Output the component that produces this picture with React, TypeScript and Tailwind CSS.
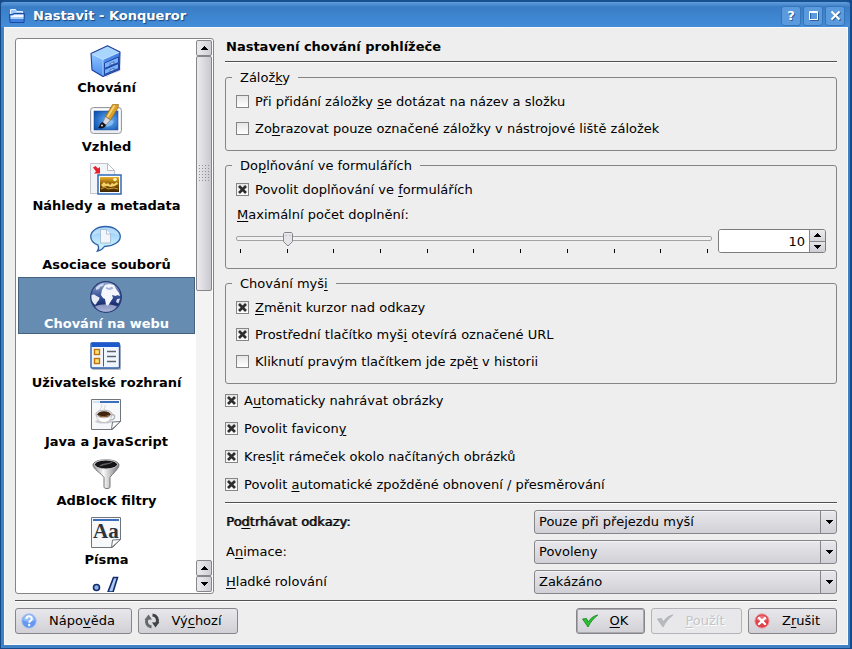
import { useState } from 'react';
import type { ReactNode } from 'react';

type IconProps = { className?: string };

const CabinetIcon = ({ className }: IconProps) => (
  <svg viewBox="0 0 32 32" className={className} aria-hidden="true">
    <defs>
      <linearGradient id="cab-left" x1="0" y1="0" x2="0" y2="1">
        <stop offset="0" stopColor="#8fc4ff" />
        <stop offset="1" stopColor="#4a8cf0" />
      </linearGradient>
      <linearGradient id="cab-right" x1="0" y1="0" x2="1" y2="1">
        <stop offset="0" stopColor="#5a9af5" />
        <stop offset="1" stopColor="#2a62d0" />
      </linearGradient>
    </defs>
    <path d="M15 32l15-6 1.500-3-14 9z" fill="#d5d3ee" />
    <path d="M1 8.500l12 6v17L2 25z" fill="url(#cab-left)" />
    <path d="M13 14.500L30 7l-.500 17.500L13 31.500z" fill="url(#cab-right)" />
    <path d="M1 8.500L17.500.700 30 7l-17 7.500z" fill="#a9d6ff" />
    <path d="M1 8.500L17.500.700 30 7l-.500 17.500L13 31.500 2 25z" fill="none" stroke="#1b3f96" strokeWidth="1.100" strokeLinejoin="round" />
    <path d="M13 14.500v16M2 9l11 5.500L29 7.500" fill="none" stroke="#c5e2ff" strokeWidth=".7" />
    <path d="M14.500 18L28.500 12v5.500L14.500 23.500zM14.500 24.500l14-6v5l-14 6z" fill="#79b3ff" stroke="#173b92" strokeWidth=".9" />
    <path d="M20 18.500l4-1.700v1.800l-4 1.700zM20 25l4-1.700v1.800l-4 1.700z" fill="#dcecff" stroke="#173b92" strokeWidth=".6" />
  </svg>
);

const AppearanceIcon = ({ className }: IconProps) => (
  <svg viewBox="0 0 32 32" className={className} aria-hidden="true">
    <defs>
      <radialGradient id="scr" cx=".6" cy=".5" r=".7">
        <stop offset="0" stopColor="#6db4f5" />
        <stop offset="1" stopColor="#0d4faf" />
      </radialGradient>
    </defs>
    <rect x=".5" y="3.500" width="31" height="26" rx="3" fill="#ececf0" stroke="#9a9aa2" />
    <rect x="2" y="5" width="28" height="22" rx="1" fill="#fff" />
    <rect x="4" y="7" width="24" height="19" fill="url(#scr)" stroke="#234f94" strokeWidth=".6" />
    <path d="M14 14l4-1 3 3 3 1-2 4-5 2-4-3z" fill="#a7d3fb" opacity=".6" />
    <path d="M22.500.500h6L28 4l-7.500 12-5-3.500z" fill="#dd9f27" stroke="#8a5a0c" strokeWidth=".6" />
    <path d="M24.500 1.500l-7 11.500" stroke="#f9d67c" strokeWidth="1.600" />
    <path d="M15.500 12.500l5 3.500-4.500 5-3.500-2z" fill="#d7d7dc" stroke="#66666e" strokeWidth=".6" />
    <path d="M12.500 18l3.500 3c-1 3-4 4-8 3 2-1 1.500-5 4.500-6z" fill="#121216" />
    <circle cx="12" cy="21.500" r="1" fill="#e4e4e8" />
  </svg>
);

const PreviewIcon = ({ className }: IconProps) => (
  <svg viewBox="0 0 32 32" className={className} aria-hidden="true">
    <defs>
      <linearGradient id="gold" x1="0" y1="0" x2="0" y2="1">
        <stop offset="0" stopColor="#e9b02c" />
        <stop offset=".45" stopColor="#8f5d05" />
        <stop offset="1" stopColor="#3c2502" />
      </linearGradient>
    </defs>
    <path d="M.500.500h17l7 7v23h-24z" fill="#f3f4f8" stroke="#c3c5cd" />
    <path d="M17.500.500v7h7z" fill="#fff" stroke="#b9bbc4" />
    <path d="M3 4.500L5.500 3 8 5.500l2-1.500v6.500H4l2-2z" fill="#e8202c" />
    <rect x="8" y="12" width="23" height="19" fill="#fff" stroke="#2f6bb8" strokeWidth="1.500" />
    <rect x="10" y="14" width="19" height="15" fill="url(#gold)" />
    <circle cx="25" cy="16.500" r="1.800" fill="#fff1a8" />
    <path d="M11 22l3-3 2 2 2-1 2 2 2-2 2 1 3-2 1 2-3 2-4 1-4-1-4 1z" fill="#f2d06a" />
    <path d="M11 26l4-2 3 2 6-1 4 1" stroke="#d29b2b" fill="none" />
  </svg>
);

const BubbleIcon = ({ className }: IconProps) => (
  <svg viewBox="0 0 32 32" className={className} aria-hidden="true">
    <defs>
      <linearGradient id="bub" x1="0" y1="0" x2="0" y2="1">
        <stop offset="0" stopColor="#8cc4f3" />
        <stop offset=".5" stopColor="#b4e0fd" />
        <stop offset="1" stopColor="#dcf8ff" />
      </linearGradient>
    </defs>
    <path d="M15.500 4.500C7 4.500.700 9 .700 14.500c0 4 3 7 7.300 8.700 1 2.300.700 4.300-.600 6 3.500-.800 5.600-2.500 7-4.700C23 24.500 30.300 20 30.300 14.500S24 4.500 15.500 4.500z" fill="url(#bub)" stroke="#2d62a9" strokeWidth="1.300" />
    <path d="M15.500 5.500C9 5.500 3 9 2.500 13 9 10 22 10 28.500 13c0-4-6-7.500-13-7.500z" fill="#fff" opacity=".3" />
    <path d="M10.500 7.500h6l4 4.500v9h-10z" fill="#f2f6fa" stroke="#9bb6cf" strokeWidth=".8" />
    <path d="M16.500 7.500V12h4" fill="#fff" stroke="#9bb6cf" strokeWidth=".8" />
  </svg>
);

const GlobeIcon = ({ className }: IconProps) => (
  <svg viewBox="0 0 32 32" className={className} aria-hidden="true">
    <defs>
      <linearGradient id="globe" x1="0" y1="0" x2="0" y2="1">
        <stop offset="0" stopColor="#98aad4" />
        <stop offset=".5" stopColor="#344f95" />
        <stop offset=".75" stopColor="#1a2e70" />
        <stop offset="1" stopColor="#8796cc" />
      </linearGradient>
    </defs>
    <circle cx="16" cy="16" r="15.300" fill="url(#globe)" stroke="#283b75" strokeWidth="1.200" />
    <path d="M1.500 14c2-1 3.500-.500 5 1l3 1.500c0 3-2.500 4-3 6L5 24c-3-3-4-6-3.500-10z" fill="#e6eaf5" />
    <path d="M6 6.500C8.500 4 11 2.500 14 2.200L13 5l-3 1-1 2-3 1z" fill="#cdd6ed" />
    <path d="M12 9l3-5 4-1 5 1 2 4 3 4 1 3-3-1-1 1-4-1 1 3-2 3-3 5-2-1-1-6-2-1-2-3z" fill="#f5f7fc" />
    <path d="M16 6l3 1 3-1.500 1.500 2L20 9l-4-1z" fill="#a5b4da" />
    <path d="M27 18l3-.500-1.500 5L26 21z" fill="#d3daed" />
    <path d="M5 25.500c6-3 16-3 22 0-5 7-17 7-22 0z" fill="#c5cdea" opacity=".65" />
  </svg>
);

const LayoutIcon = ({ className }: IconProps) => (
  <svg viewBox="0 0 32 32" className={className} aria-hidden="true">
    <rect x="2" y="5" width="29" height="25" rx="1" fill="#bcbcc4" />
    <rect x="1" y="3" width="28.500" height="25" rx="1" fill="#f0f6ff" stroke="#2d5fa8" strokeWidth="1.400" />
    <rect x="1.500" y="2.500" width="27.500" height="4.500" fill="#1c58cb" />
    <path d="M13.500 8v18.500" stroke="#4b5a78" />
    <rect x="4.500" y="9.500" width="5" height="5" fill="#ffe27a" stroke="#c2720c" strokeWidth="1.400" />
    <rect x="4.500" y="18.500" width="5" height="5" fill="#ffe27a" stroke="#c2720c" strokeWidth="1.400" />
    <path d="M17 11.500h9M17 16.500h9M17 21.500h9" stroke="#5c6068" strokeWidth="1.300" />
  </svg>
);

const PageFrame = ({ children, className }: IconProps & { children: ReactNode }) => (
  <svg viewBox="0 0 32 32" className={className} aria-hidden="true">
    <path d="M1.500.500h29v22l-8 8h-21z" fill="#f7f8f9" stroke="#70757c" />
    <rect x="3" y="2" width="26" height="2" fill="#3a70bb" />
    {children}
    <path d="M21.500 30.500l1-7.500 8-.500z" fill="#fff" stroke="#70757c" />
  </svg>
);

const JavaIcon = ({ className }: IconProps) => (
  <PageFrame className={className}>
    <rect x="3" y="2" width="7" height="2" fill="#d3e0f2" />
    <path d="M11 12c-3-3 3-3 0-7M15 11c-2-2 1-3 0-5" stroke="#d3d4d8" fill="none" />
    <path d="M21 16c5-2 5 5-1 5" fill="none" stroke="#b5b7bc" strokeWidth="1.500" />
    <ellipse cx="14" cy="22.500" rx="9" ry="2" fill="#cdced2" />
    <path d="M6 14.500c0 12 16 12 16 0z" fill="#fff" stroke="#b5b7bc" strokeWidth=".8" />
    <ellipse cx="14" cy="15" rx="8" ry="3.800" fill="#e5e5e8" stroke="#9c9ea4" strokeWidth=".7" />
    <ellipse cx="14" cy="15.200" rx="6.500" ry="2.900" fill="#3e2411" />
    <path d="M9 16.500c3 2 8 1 10-.500" stroke="#a66a37" fill="none" />
  </PageFrame>
);

const FunnelIcon = ({ className }: IconProps) => (
  <svg viewBox="0 0 32 32" className={className} aria-hidden="true">
    <defs>
      <linearGradient id="fun" x1="0" y1="0" x2="1" y2="0">
        <stop offset="0" stopColor="#8a8a8e" />
        <stop offset=".4" stopColor="#fafafa" />
        <stop offset="1" stopColor="#77777b" />
      </linearGradient>
    </defs>
    <path d="M3 7c0-7 26-7 26 0 0 4-7 9-9 12.500V29c0 2-6 2-6 0v-9.500C12 16 3 11 3 7z" fill="url(#fun)" stroke="#77777c" />
    <ellipse cx="16" cy="6.500" rx="11.500" ry="4.500" fill="#141416" stroke="#d5d5d8" />
    <path d="M10 8c4-3 8-1 12-4" stroke="#5d5d62" strokeWidth="1.500" fill="none" />
  </svg>
);

const FontsIcon = ({ className }: IconProps) => (
  <PageFrame className={className}>
    <text x="3" y="21" fontSize="21" fontWeight="700" fontFamily="Liberation Serif, serif" fill="#2e343b">Aa</text>
  </PageFrame>
);

const StylesheetIcon = ({ className }: IconProps) => (
  <svg viewBox="0 0 32 32" className={className} aria-hidden="true">
    <circle cx="6.500" cy="11.500" r="3" fill="#8bb4ec" stroke="#122a6b" strokeWidth="1.600" />
    <path d="M23.500 1.500h4L23 16h-5z" fill="#a9c9f4" stroke="#122a6b" strokeWidth="1.600" />
  </svg>
);

const HelpIcon = () => (
  <svg viewBox="0 0 16 16" className="size-4" aria-hidden="true">
    <circle cx="8" cy="8" r="7.300" fill="#6698f0" stroke="#b3c8f0" />
    <path d="M2 7a6 6 0 0112 0c-3 2-9 2-12 0z" fill="#93bbfa" />
    <path d="M5.400 6c0-3.600 5.400-3.400 5.400-.300 0 2-2.600 2-2.600 4" fill="none" stroke="#fff" strokeWidth="2" />
    <circle cx="8.200" cy="12" r="1.200" fill="#fff" />
  </svg>
);

const ResetIcon = () => (
  <svg viewBox="0 0 16 16" className="size-4" aria-hidden="true">
    <path d="M7.500 14C3.500 13.500 1.500 10 3 6" fill="none" stroke="#66696e" strokeWidth="3" />
    <path d="M.500 7L4.500 1.500 8 6.500z" fill="#66696e" />
    <path d="M8.500 2c4 .500 6 4 4.500 8" fill="none" stroke="#3f4246" strokeWidth="3" />
    <path d="M15.500 9L11.500 14.500 8 9.500z" fill="#3f4246" />
  </svg>
);

const CheckIcon = ({ disabled }: { disabled?: boolean }) => (
  <svg viewBox="0 0 16 16" className="size-4" aria-hidden="true">
    <path
      d="M.500 6l4-.500 1.700 3.500C8.500 5.500 11 3 15.800 2 11.500 5.500 8.500 9 6 14z"
      fill={disabled ? '#b9babd' : '#2cc232'}
      stroke={disabled ? '#adaeb1' : '#15801c'}
      strokeWidth=".8"
    />
  </svg>
);

const CancelIcon = () => (
  <svg viewBox="0 0 16 16" className="size-4" aria-hidden="true">
    <circle cx="8" cy="8" r="7.200" fill="#dd4249" stroke="#eba5a8" />
    <path d="M2.500 7a5.600 5.600 0 0111 0c-3 1-8 1-11 0z" fill="#ec757a" />
    <path d="M5 5l6 6M11 5l-6 6" stroke="#fff" strokeWidth="2.400" strokeLinecap="round" />
  </svg>
);

const UpArrow = () => (
  <svg viewBox="0 0 7 4" className="h-1 w-[7px]" shapeRendering="crispEdges" aria-hidden="true">
    <path d="M3 0h1v1h1v1h1v1h1v1H0V3h1V2h1V1h1z" />
  </svg>
);

const DownArrow = () => (
  <svg viewBox="0 0 7 4" className="h-1 w-[7px]" shapeRendering="crispEdges" aria-hidden="true">
    <path d="M0 0h7v1H6v1H5v1H4v1H3V3H2V2H1V1H0z" />
  </svg>
);

const PAGES = [
  { id: 'behavior', label: 'Chování', Icon: CabinetIcon },
  { id: 'look', label: 'Vzhled', Icon: AppearanceIcon },
  { id: 'previews', label: 'Náhledy a metadata', Icon: PreviewIcon },
  { id: 'files', label: 'Asociace souborů', Icon: BubbleIcon },
  { id: 'web', label: 'Chování na webu', Icon: GlobeIcon },
  { id: 'ui', label: 'Uživatelské rozhraní', Icon: LayoutIcon },
  { id: 'java', label: 'Java a JavaScript', Icon: JavaIcon },
  { id: 'adblock', label: 'AdBlocK filtry', Icon: FunnelIcon },
  { id: 'fonts', label: 'Písma', Icon: FontsIcon },
  { id: 'css', label: '', Icon: StylesheetIcon },
];

const TICKS = [0, 10, 20, 30, 40, 50, 60, 70, 80, 90, 100];

// "_" stands before the accelerator letter
const Accel = ({ text }: { text: string }) => {
  const [before, rest] = text.split('_');
  if (!rest) return <span>{before}</span>;
  return (
    <span className="whitespace-pre">
      {before}
      <span className="underline underline-offset-2">{rest[0]}</span>
      {rest.slice(1)}
    </span>
  );
};

const Check = ({ text, checked = false }: { text: string; checked?: boolean }) => (
  <label className="flex items-center gap-1.5">
    <span className="grid">
      <input
        type="checkbox"
        defaultChecked={checked}
        className="peer col-start-1 row-start-1 size-[13px] appearance-none border border-[#858585] bg-gradient-to-b from-[#e6e6e6] to-white"
      />
      <svg
        viewBox="0 0 13 13"
        className="pointer-events-none invisible col-start-1 row-start-1 size-[13px] peer-checked:visible"
        aria-hidden="true"
      >
        <path d="M3 3l7 7M10 3l-7 7" stroke="#2e2e2e" strokeWidth="2.700" />
      </svg>
    </span>
    <span className="pt-px"><Accel text={text} /></span>
  </label>
);

const Group = ({ title, className = '', children }: { title: string; className?: string; children: ReactNode }) => (
  <fieldset className={`rounded-[3px] border border-[#858585] px-2.5 ${className}`}>
    <legend className="-ml-1 px-2 pt-0.5"><Accel text={title} /></legend>
    {children}
  </fieldset>
);

const Combo = ({ id, label, options, marked }: { id: string; label: string; options: string[]; marked?: boolean }) => (
  <div className="grid grid-cols-2 items-center gap-1.5">
    <label htmlFor={id} className={marked ? 'pl-px [text-shadow:1px_0_0_#000000b0]' : 'pl-px'}>
      <Accel text={label} />
    </label>
    <div className="grid">
      <select
        id={id}
        className="col-start-1 row-start-1 h-6 w-full appearance-none rounded-[3px] border border-[#85858a] bg-gradient-to-b from-[#e8e8ec] to-[#d0d0d6] pl-1 pr-5 shadow-[inset_0_1px_0_#f4f4f6]"
      >
        {options.map((o) => <option key={o}>{o}</option>)}
      </select>
      <span className="pointer-events-none col-start-1 row-start-1 flex w-[17px] items-center justify-center justify-self-end border-l border-[#85858a]">
        <DownArrow />
      </span>
    </div>
  </div>
);

const PushButton = ({ text, icon, disabled, isDefault, className }: {
  text: string;
  icon: ReactNode;
  disabled?: boolean;
  isDefault?: boolean;
  className: string;
}) => (
  <button
    type="button"
    disabled={disabled}
    className={`flex h-[26px] items-center rounded-[3px] border pl-[5px] pr-1 ${
      disabled
        ? 'border-[#b4b4b8] bg-[#e8e8ea] text-[#c4c4c8] [text-shadow:1px_1px_0_#fff]'
        : 'border-[#85858a] bg-gradient-to-b from-[#e8e8ec] to-[#d0d0d6]'
    } ${isDefault ? 'shadow-[inset_0_0_0_1px_#a9a9ae]' : ''} ${className}`}
  >
    {icon}
    <span className="flex-1 text-center"><Accel text={text} /></span>
  </button>
);

const Divider = () => <hr className="border-0 border-t border-b border-t-[#505050] border-b-white" />;

const titleButton =
  'flex h-5 w-5 items-center justify-center rounded-[3px] border border-[#3474b9] bg-[#5b9bdd] text-white';
const scrollButton =
  'flex h-4 w-full items-center justify-center rounded-[2px] border border-[#85858a] bg-gradient-to-r from-[#ececf0] to-[#cdcdd3]';

export default function App() {
  const [page, setPage] = useState('web');
  const [limit, setLimit] = useState(10);

  const changeLimit = (value: number) => setLimit(Math.max(0, Math.min(100, value || 0)));

  return (
    <div className="flex h-screen flex-col border-b border-l border-r-2 border-[#15498a] bg-[#15498a] font-['DejaVu_Sans',sans-serif] text-[13px] leading-4 text-black">
      {/* TITLE BAR */}
      <header className="flex h-[27px] shrink-0 items-center gap-2 rounded-t border-t-2 border-t-[#17508f] bg-gradient-to-b from-[#629ddd] via-[#3a7dc6] via-20% to-[#448dd8] pl-2 pr-[5px] pt-0.5">
        <svg viewBox="0 0 16 16" className="size-4" aria-hidden="true">
          <path d="M1.500 9V1.500h5l1 2h6V9z" fill="#9cc8fb" stroke="#e4f1ff" />
          <path d="M.500 6.500H3l2-1h10.500L15 14.500H1z" fill="#3f7fe0" stroke="#1c4b9c" />
          <path d="M1.500 7.500h2l2-1h9V9H1.500z" fill="#f4f9ff" />
          <path d="M1.500 9h13v2h-13z" fill="#a9cdf8" />
        </svg>
        <h1 className="flex-1 font-bold text-white [text-shadow:1px_1px_1px_#17457d]">Nastavit - Konqueror</h1>
        <div className="flex gap-0.5">
          <button type="button" aria-label="Nápověda" className={titleButton}>
            <span className="font-bold [text-shadow:1px_1px_0_#2c5f9c]">?</span>
          </button>
          <button type="button" aria-label="Maximalizovat" className={titleButton}>
            <svg viewBox="0 0 11 11" className="size-[11px]" aria-hidden="true">
              <path d="M2.500 2.500h8v8h-8z" fill="none" stroke="#2c5f9c" />
              <path d="M1.500 1.500h8v8h-8zM1 2.500h9" fill="none" stroke="#fff" />
            </svg>
          </button>
          <button type="button" aria-label="Zavřít" className={titleButton}>
            <svg viewBox="0 0 11 11" className="size-[11px]" aria-hidden="true">
              <path d="M2.500 2.500l8 8M10.500 2.500l-8 8" stroke="#2c5f9c" strokeWidth="2" />
              <path d="M1.500 1.500l8 8M9.500 1.500l-8 8" stroke="#fff" strokeWidth="2" />
            </svg>
          </button>
        </div>
      </header>

      <div className="flex min-h-0 flex-1 flex-col border-b-[3px] border-l-[3px] border-r-2 border-[#4080c4] bg-[#eeeeee] px-[11px] pb-[11px] pt-[11px] shadow-[inset_0_0_0_1px_#fafafa]">
        <main className="flex min-h-0 flex-1 gap-[11px]">
          {/* PAGE LIST */}
          <nav className="flex w-[199px] shrink-0 overflow-hidden rounded-[3px] border border-[#858585] bg-white p-px">
            <div className="flex min-w-0 flex-1 flex-col gap-0.5 overflow-y-auto px-px pt-px [scrollbar-width:none]">
              {PAGES.map(({ id, label, Icon }) => (
                <button
                  key={id}
                  type="button"
                  onClick={() => setPage(id)}
                  className={`flex h-[57px] shrink-0 flex-col items-center gap-[3px] border pt-[3px] font-bold ${
                    page === id ? 'border-[#46617d] bg-[#678cb2] text-white' : 'border-transparent'
                  }`}
                >
                  <Icon className="-ml-0.5 size-8 shrink-0" />
                  {label && <span className="whitespace-nowrap">{label}</span>}
                </button>
              ))}
            </div>
            <div className="flex w-4 shrink-0 flex-col bg-[#f3f3f4]">
              <button type="button" aria-label="Nahoru" className={scrollButton}><UpArrow /></button>
              <div className="flex h-[235px] flex-col items-center rounded-[2px] border border-[#85858a] bg-gradient-to-r from-[#ebebef] to-[#c9c9d0] pt-[108px]">
                <div className="grid grid-cols-4 gap-0.5">
                  {Array.from({ length: 24 }, (_, i) => <i key={i} className="size-px bg-[#8f8f96]" />)}
                </div>
              </div>
              <div className="flex-1" />
              <button type="button" aria-label="Nahoru" className={scrollButton}><UpArrow /></button>
              <button type="button" aria-label="Dolů" className={scrollButton}><DownArrow /></button>
            </div>
          </nav>

          {/* SETTINGS */}
          <section className="flex min-w-0 flex-1 flex-col">
            <h2 className="mb-1.5 pl-px pt-px font-bold">Nastavení chování prohlížeče</h2>
            <Divider />

            <div className="flex flex-col gap-[5px] pt-[5px]">
              <Group title="Zálož_ky" className="h-[83px]">
                <div className="flex flex-col gap-2.5 pt-[7px]">
                  <Check text="Při přidání záložky _se dotázat na název a složku" />
                  <Check text="Zo_brazovat pouze označené záložky v nástrojové liště záložek" />
                </div>
              </Group>

              <Group title="Do_plňování ve formulářích" className="h-[113px]">
                <div className="flex flex-col pt-[7px]">
                  <Check text="Povolit doplňování ve _formulářích" checked />
                  <label htmlFor="limit" className="mt-[9px] pl-px"><Accel text="_Maximální počet doplnění:" /></label>
                  <div className="mt-1.5 flex gap-1.5">
                    <div className="relative h-6 flex-1">
                      <div className="mt-[7px] h-[5px] rounded-[2px] border border-[#a2a2a2] bg-[#f2f2f2]" />
                      <div className="mx-[5px] mt-2 flex justify-between">
                        {TICKS.map((tick) => <i key={tick} className="-mx-px h-1 w-px bg-black" />)}
                      </div>
                      <div className="pointer-events-none absolute inset-x-[5px] top-[3px]">
                        <svg
                          viewBox="0 0 12 15"
                          className="relative h-[15px] w-3 -translate-x-1/2"
                          style={{ left: `${limit}%` }}
                          aria-hidden="true"
                        >
                          <path d="M1.500 1.500l1-1h7l1 1v8L6 14 1.500 9.500z" fill="#e4e4e9" stroke="#85858a" />
                          <path d="M3.500 3.500h1M7.500 3.500h1" stroke="#a5a5ac" />
                        </svg>
                      </div>
                      <input
                        type="range"
                        aria-label="Maximální počet doplnění"
                        min={0}
                        max={100}
                        value={limit}
                        onChange={(e) => changeLimit(Number(e.target.value))}
                        className="absolute inset-0 w-full opacity-0"
                      />
                    </div>
                    <div className="flex h-6 w-[108px] overflow-hidden rounded-[3px] border border-[#7c7c7c]">
                      <input
                        id="limit"
                        inputMode="numeric"
                        value={limit}
                        onChange={(e) => changeLimit(Number(e.target.value))}
                        className="min-w-0 flex-1 bg-white pr-1 pt-px text-right outline-none"
                      />
                      <div className="flex w-4 flex-col border-l border-[#85858a]">
                        <button
                          type="button"
                          aria-label="Zvýšit"
                          onClick={() => changeLimit(limit + 1)}
                          className="flex flex-1 items-center justify-center border-b border-[#85858a] bg-gradient-to-b from-[#ececf0] to-[#d4d4d9]"
                        >
                          <UpArrow />
                        </button>
                        <button
                          type="button"
                          aria-label="Snížit"
                          onClick={() => changeLimit(limit - 1)}
                          className="flex flex-1 items-center justify-center bg-gradient-to-b from-[#e4e4e8] to-[#cdcdd3]"
                        >
                          <DownArrow />
                        </button>
                      </div>
                    </div>
                  </div>
                </div>
              </Group>

              <Group title="Chování myš_i" className="h-[110px]">
                <div className="flex flex-col gap-2.5 pt-[7px]">
                  <Check text="_Změnit kurzor nad odkazy" checked />
                  <Check text="Prostřední tlačítko myš_i otevírá označené URL" checked />
                  <Check text="Kliknutí pravým tlačítkem jde zpě_t v historii" />
                </div>
              </Group>
            </div>

            <div className="mb-[9px] mt-2 flex flex-col gap-[11px]">
              <Check text="A_utomaticky nahrávat obrázky" checked />
              <Check text="Povolit favicon_y" checked />
              <Check text="Kres_lit rámeček okolo načítaných obrázků" checked />
              <Check text="Povolit _automatické zpožděné obnovení / přesměrování" checked />
            </div>
            <Divider />

            <div className="flex flex-col gap-1.5 pt-1.5">
              <Combo id="links" label="Po_dtrhávat odkazy:" marked options={['Pouze při přejezdu myší', 'Povoleny', 'Zakázáno']} />
              <Combo id="anim" label="A_nimace:" options={['Povoleny', 'Zakázáno']} />
              <Combo id="smooth" label="_Hladké rolování" options={['Zakázáno', 'Povoleny']} />
            </div>
          </section>
        </main>

        {/* BUTTONS */}
        <footer className="mt-1.5">
          <Divider />
          <div className="mt-1.5 flex gap-1.5">
            <PushButton text="Nápo_věda" icon={<HelpIcon />} className="w-[117px]" />
            <PushButton text="Vý_chozí" icon={<ResetIcon />} className="w-[100px]" />
            <div className="flex-1" />
            <PushButton text="_OK" icon={<CheckIcon />} isDefault className="w-[69px]" />
            <PushButton text="_Použít" icon={<CheckIcon disabled />} disabled className="w-[91px]" />
            <PushButton text="Z_rušit" icon={<CancelIcon />} className="w-[89px]" />
          </div>
        </footer>
      </div>
    </div>
  );
}
